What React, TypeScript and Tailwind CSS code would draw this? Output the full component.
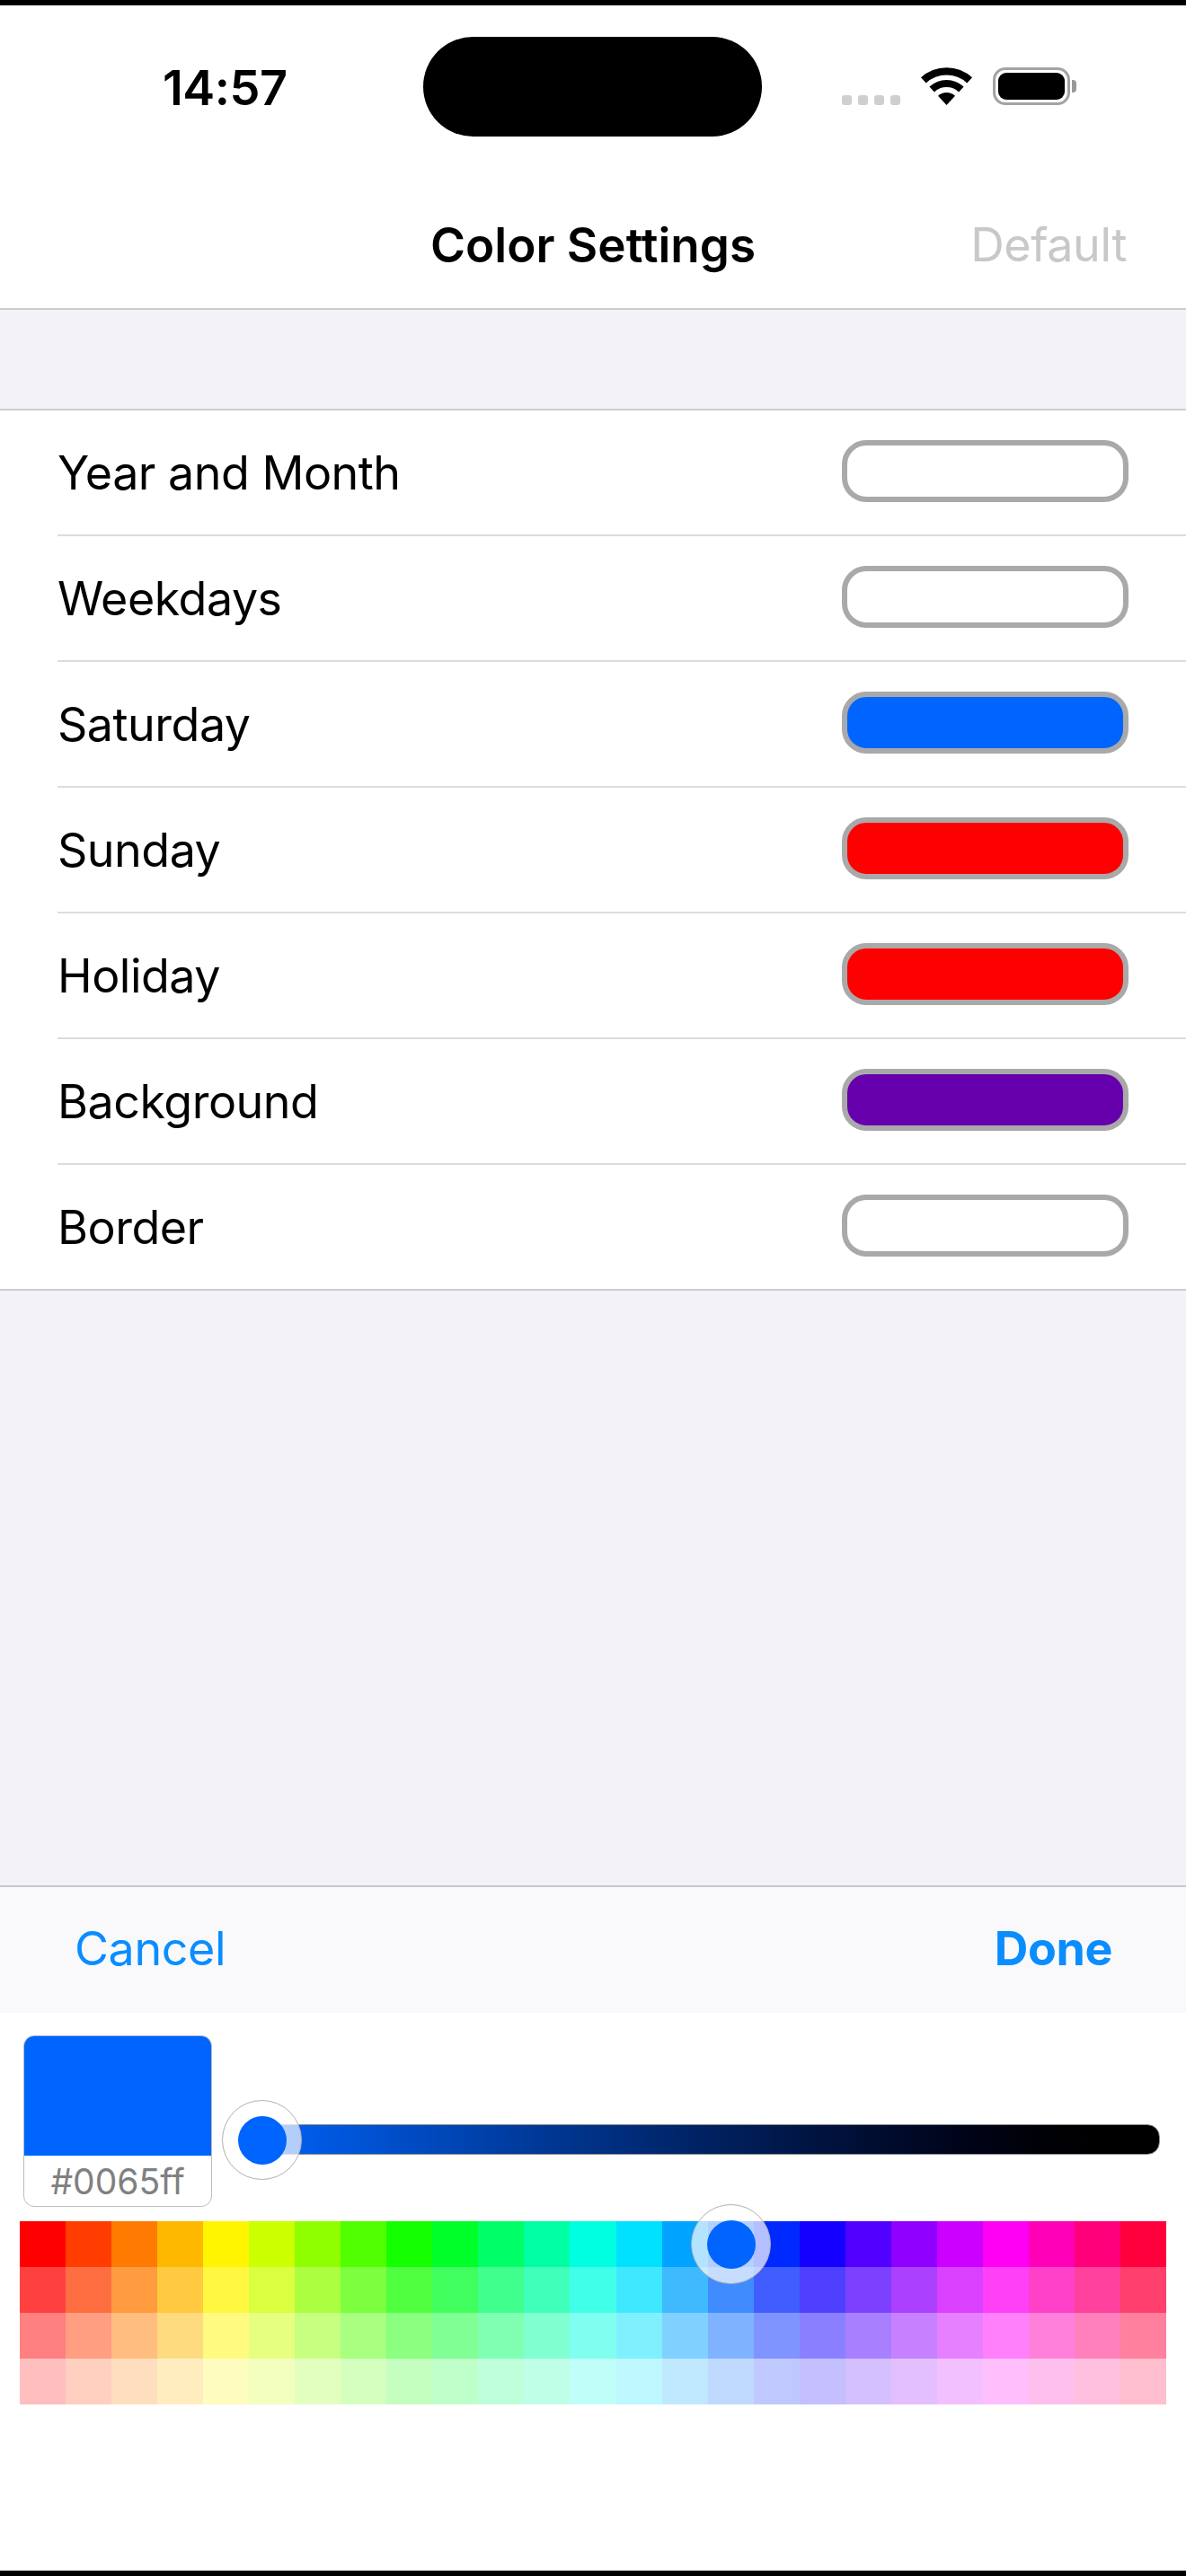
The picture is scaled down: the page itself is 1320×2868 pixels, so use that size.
import React from "react";

const rows = [
  { label: "Year and Month", color: "bg-white" },
  { label: "Weekdays", color: "bg-white" },
  { label: "Saturday", color: "bg-[#0065ff]" },
  { label: "Sunday", color: "bg-[#ff0000]" },
  { label: "Holiday", color: "bg-[#ff0000]" },
  { label: "Background", color: "bg-[#6600ad]" },
  { label: "Border", color: "bg-white" },
];

const lightness = [50, 62.5, 75, 87.5];

function Palette() {
  const cells: React.ReactNode[] = [];
  lightness.forEach((l) => {
    for (let i = 0; i < 25; i++) {
      cells.push(
        <div key={`${l}-${i}`} style={{ backgroundColor: `hsl(${i * 14.4} 100% ${l}%)` }} />
      );
    }
  });
  return <div className="grid grid-cols-[repeat(25,1fr)] grid-rows-[repeat(4,51px)] w-full">{cells}</div>;
}

function Thumb({ className }: { className: string }) {
  return (
    <div
      className={`absolute w-[89px] h-[89px] rounded-full bg-[rgba(255,255,255,0.7)] border-[1.5px] border-[#b0b0b0] flex items-center justify-center ${className}`}
    >
      <div className="w-[54px] h-[54px] rounded-full bg-[#0065ff]" />
    </div>
  );
}

export default function App() {
  return (
    <div className="w-[1320px] h-[2868px] flex flex-col bg-[#f2f2f7] overflow-hidden font-['Inter','Liberation_Sans',sans-serif] text-black">
      <div className="h-[6px] bg-black shrink-0" />

      {/* status bar + nav */}
      <div className="bg-white shrink-0 h-[339px] flex flex-col border-b-2 border-[#cdcdd0]">
        <div className="flex items-start pt-[35px] h-[146px] shrink-0">
          <div className="w-[471px] pl-[181px] pt-[27px] text-[54px] leading-[60px] font-semibold tracking-[-0.5px]">14:57</div>
          <div className="w-[377px] h-[111px] rounded-full bg-black shrink-0" />
          <div className="ml-[89px] mt-[65px] flex gap-[7px]">
            <div className="w-[11px] h-[11px] rounded-[3px] bg-[#cfcfcf]" />
            <div className="w-[11px] h-[11px] rounded-[3px] bg-[#cfcfcf]" />
            <div className="w-[11px] h-[11px] rounded-[3px] bg-[#cfcfcf]" />
            <div className="w-[11px] h-[11px] rounded-[3px] bg-[#cfcfcf]" />
          </div>
          <svg className="ml-[23px] mt-[34px]" width="57" height="42" viewBox="0 0 57 42" fill="#000">
            <path d="M0 11.3A42 42 0 0 1 57 11.3L51.3 17.5A33.5 33.5 0 0 0 5.7 17.5Z" />
            <path d="M9.4 21.5A28 28 0 0 1 47.6 21.5L42.1 27.4A20 20 0 0 0 14.9 27.4Z" />
            <path d="M19 31.8A14 14 0 0 1 38 31.8L28.5 42Z" />
          </svg>
          <div className="ml-[23px] mt-[34px] flex items-center">
            <div className="w-[86px] h-[42px] rounded-[14px] border-[3.5px] border-[#a3a3a3] p-[3px]">
              <div className="w-full h-full rounded-[9px] bg-black" />
            </div>
            <div className="ml-[2px] w-[5px] h-[14px] rounded-r-[4px] bg-[#999999]" />
          </div>
        </div>
        <div className="grid grid-cols-[1fr_auto_1fr] items-center pt-[91px]">
          <div />
          <div className="text-[53px] leading-[60px] font-semibold">Color Settings</div>
          <div className="justify-self-end pr-[66px] text-[52px] leading-[60px] tracking-[-0.4px] text-[#c8c8c8]">Default</div>
        </div>
      </div>

      {/* gap */}
      <div className="h-[110px] shrink-0" />

      {/* list */}
      <div className="bg-white shrink-0 border-y-2 border-[#cdcdd0]">
        {rows.map((r, i) => (
          <div key={r.label} className="pl-[64px]">
            <div
              className={`flex items-center justify-between pr-[64px] ${
                i < rows.length - 1 ? "h-[140px] border-b-2 border-[#dcdcde]" : "h-[138px]"
              }`}
            >
              <span className="mt-[2px] text-[52px] leading-[60px] tracking-[-0.5px] font-normal">{r.label}</span>
              <div className={`mb-[3px] w-[319px] h-[69px] rounded-[27px] border-[6px] border-[#a9a9a9] ${r.color}`} />
            </div>
          </div>
        ))}
      </div>

      <div className="flex-1" />

      {/* picker */}
      <div className="shrink-0 h-[763px] bg-white flex flex-col">
        <div className="h-[142px] shrink-0 bg-[#f9f9fb] border-t-2 border-[#c8c8cc] flex items-center justify-between pl-[83px] pr-[82px] pb-[2px] text-[52px] leading-[60px] tracking-[-0.4px] text-[#0a8dff]">
          <span>Cancel</span>
          <span className="font-bold">Done</span>
        </div>
        <div className="flex pt-[25px] pl-[26px] shrink-0">
          <div className="w-[210px] h-[191px] rounded-[12px] border-[1.5px] border-[#bdbdbd] overflow-hidden flex flex-col bg-white shrink-0">
            <div className="h-[133px] bg-[#0065ff] shrink-0" />
            <div className="flex-1 flex items-center justify-center pt-[2px] text-[39px] leading-[46px] text-[#808080]">#0065ff</div>
          </div>
          <div className="relative ml-[34px] mt-[99px] w-[1021px] h-[34px] rounded-[14px] border border-[#8f8f8f] bg-linear-to-r from-[#0065ff] to-black">
            <Thumb className="left-[-24px] top-[-28px]" />
          </div>
        </div>
        <div className="relative mt-[16px] ml-[22px] w-[1276px] shrink-0">
          <Palette />
          <Thumb className="left-[747px] top-[-19px]" />
        </div>
      </div>

      <div className="h-[6px] bg-black shrink-0" />
    </div>
  );
}
